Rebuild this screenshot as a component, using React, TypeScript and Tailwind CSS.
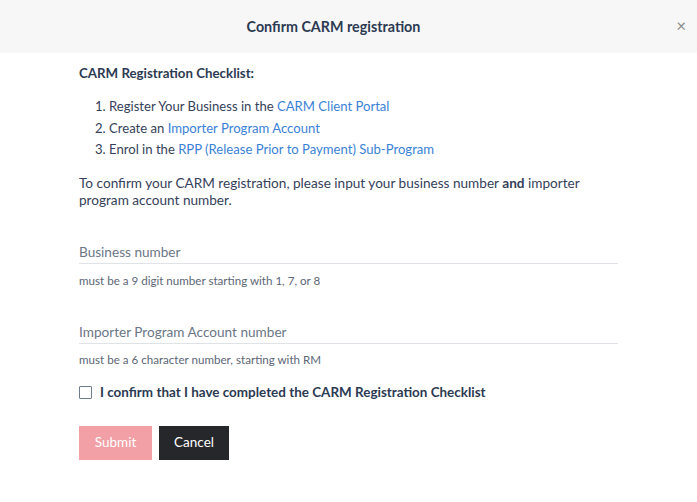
import React from "react";

export default function App() {
  const font = { fontFamily: "Lato, 'Noto Sans', sans-serif" };
  return (
    <div className="w-[697px] h-[502px] bg-white text-[#35415a]" style={font}>
      <div className="h-[53px] bg-[#f7f7f7] flex items-center justify-center relative pr-[30px]">
        <h1 className="text-[14.3px] font-bold text-[#2c3a52]">Confirm CARM registration</h1>
        <button className="absolute right-[11px] top-[17px] text-[#8a8a8a] text-[17px] leading-none">×</button>
      </div>
      <div className="pl-[79px] pr-[79px] pt-[10px] text-[13px]">
        <p className="font-bold leading-[20px] text-[13.3px] text-[#2c3a52]">CARM Registration Checklist:</p>
        <ol className="mt-[13px] pl-[16px] leading-[21.5px] text-[13.1px]">
          <li>1. Register Your Business in the <a className="text-[#3b82d6]">CARM Client Portal</a></li>
          <li>2. Create an <a className="text-[#3b82d6]">Importer Program Account</a></li>
          <li>3. Enrol in the <a className="text-[#3b82d6]">RPP (Release Prior to Payment) Sub-Program</a></li>
        </ol>
        <p className="mt-[14px] leading-[17.5px] text-[13.6px]">
          To confirm your CARM registration, please input your business number <b>and</b> importer program account number.
        </p>
        <div className="mt-[33px]">
          <div className="border-b border-[#dfe2e6] pb-[2px] text-[#6b7686] text-[13.6px] leading-[18px]">Business number</div>
          <div className="mt-[10px] text-[11.6px] text-[#5c6676] leading-[14px]">must be a 9 digit number starting with 1, 7, or 8</div>
        </div>
        <div className="mt-[35px]">
          <div className="border-b border-[#dfe2e6] pb-[2px] text-[#6b7686] text-[13.6px] leading-[18px]">Importer Program Account number</div>
          <div className="mt-[9px] text-[11.6px] text-[#5c6676] leading-[14px]">must be a 6 character number, starting with RM</div>
        </div>
        <label className="mt-[17px] h-[18px] flex items-center gap-[8px]">
          <span className="w-[13px] h-[13px] border border-[#6e7c8c] rounded-[1px] bg-white"></span>
          <span className="font-bold text-[13.45px] text-[#2c3a52]">I confirm that I have completed the CARM Registration Checklist</span>
        </label>
        <div className="mt-[24px] flex gap-[7px]">
          <button className="w-[73px] h-[34px] bg-[#f2a0a6] text-white text-[13.5px]">Submit</button>
          <button className="w-[70px] h-[34px] bg-[#26272b] text-white text-[13.5px]">Cancel</button>
        </div>
      </div>
    </div>
  );
}
